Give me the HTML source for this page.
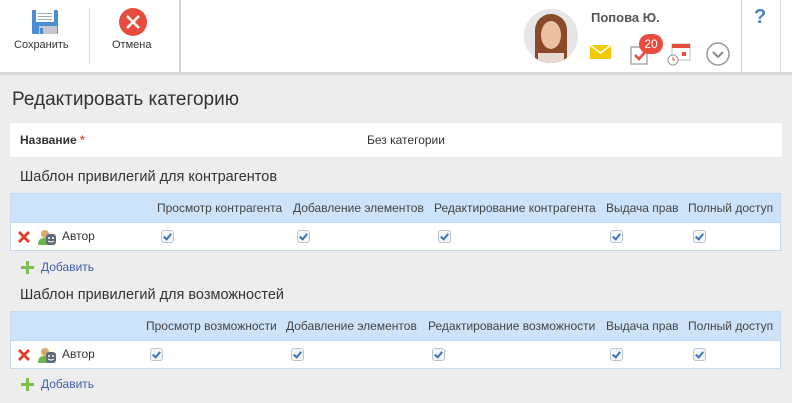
<!DOCTYPE html>
<html><head><meta charset="utf-8"><style>
*{box-sizing:border-box;margin:0;padding:0}
body{width:792px;height:403px;background:#ededed;font-family:"Liberation Sans",sans-serif;position:relative;overflow:hidden;color:#333}
.abs{position:absolute}
.hdr{left:0;top:0;width:792px;height:75px;background:#fff;border-bottom:3px solid #d4d6d9}
.btnlbl{font-size:11px;color:#333}
.tbl{position:absolute;left:10px;width:771px;border:1px solid #c7d9ee;background:#fff}
.th{height:28px;background:#cde3fa;position:relative;font-size:12px;color:#444}
.tr{height:28px;position:relative;font-size:12px}
.th span{position:absolute;top:7px}
.cb{position:absolute;top:7px;width:13px;height:13px;border:1px solid #b9c4d0;border-radius:3px;background:#f4f7fa}
.cb:after{content:"";position:absolute;left:3px;top:1px;width:3px;height:6px;border:solid #3b73b9;border-width:0 2px 2px 0;transform:rotate(40deg)}
.add{font-size:12px;color:#3f5fa8}
.plus{position:absolute;width:13px;height:13px}
.plus:before{content:"";position:absolute;left:5px;top:0;width:3px;height:13px;background:#7cc14a}
.plus:after{content:"";position:absolute;left:0;top:5px;width:13px;height:3px;background:#7cc14a}
.sec{font-size:14.5px;color:#333}
</style></head><body>
<div class="abs hdr"></div>
<div class="abs" style="left:32px;top:10px;width:26px;height:24px;background:#4a8fd4;border-radius:1px"></div>
<div class="abs" style="left:36px;top:10px;width:18px;height:12px;background:#fff"></div>
<div class="abs" style="left:38px;top:13px;width:14px;height:1px;background:#9ab"></div>
<div class="abs" style="left:38px;top:16px;width:14px;height:1px;background:#9ab"></div>
<div class="abs" style="left:38px;top:19px;width:14px;height:1px;background:#9ab"></div>
<div class="abs" style="left:39px;top:26px;width:18px;height:8px;background:#c5c8cc"></div>
<div class="abs" style="left:40px;top:28px;width:3px;height:6px;background:#4a8fd4"></div>
<div class="abs btnlbl" style="left:14px;top:39px">Сохранить</div>
<div class="abs" style="left:89px;top:8px;width:1px;height:56px;background:#ddd"></div>
<div class="abs" style="left:119px;top:8px;width:28px;height:28px;border-radius:50%;background:#e84c3d"></div>
<svg class="abs" style="left:119px;top:8px" width="28" height="28"><path d="M8 8L20 20M20 8L8 20" stroke="#fff" stroke-width="2.5"/></svg>
<div class="abs btnlbl" style="left:112px;top:39px">Отмена</div>
<div class="abs" style="left:179px;top:0;width:2px;height:72px;background:#d4d6d9"></div>
<div class="abs" style="left:524px;top:9px;width:54px;height:54px;border-radius:50%;background:#e6e6e6;overflow:hidden">
<div style="position:absolute;left:11px;top:5px;width:32px;height:56px;border-radius:16px 16px 6px 6px;background:#8a4a2a"></div>
<div style="position:absolute;left:17px;top:12px;width:20px;height:28px;border-radius:50%;background:#ecc0a2"></div>
<div style="position:absolute;left:14px;top:44px;width:26px;height:14px;background:#e8d8d0"></div>
</div>
<div class="abs" style="left:591px;top:10px;font-size:13px;color:#555;font-weight:bold">Попова Ю.</div>
<svg class="abs" style="left:590px;top:45px" width="21" height="14"><rect width="21" height="14" fill="#f5c900"/><path d="M0 0L10.5 8L21 0" stroke="#fff" stroke-width="1.5" fill="none"/></svg>
<svg class="abs" style="left:630px;top:45px" width="20" height="20"><rect x="1" y="2" width="16" height="17" fill="none" stroke="#aaa" stroke-width="1.5"/><path d="M5 10l4 4l6-7" stroke="#e84c3d" stroke-width="2.5" fill="none"/></svg>
<div class="abs" style="left:639px;top:34px;width:24px;height:20px;border-radius:10px;background:#e84c3d;color:#fff;font-size:12px;text-align:center;line-height:20px">20</div>
<svg class="abs" style="left:667px;top:43px" width="26" height="24"><rect x="5" y="1" width="18" height="16" fill="#fff" stroke="#bbb"/><rect x="5" y="1" width="18" height="4" fill="#e84c3d"/><rect x="15" y="9" width="4" height="4" fill="#e84c3d"/><circle cx="6" cy="17" r="5" fill="#fff" stroke="#999"/><path d="M6 14v3h2" stroke="#e84c3d" fill="none"/></svg>
<svg class="abs" style="left:706px;top:42px" width="24" height="24"><circle cx="12" cy="12" r="11" fill="none" stroke="#999" stroke-width="1.5"/><path d="M7 10l5 5l5-5" stroke="#888" stroke-width="2" fill="none"/></svg>
<div class="abs" style="left:741px;top:0;width:1px;height:72px;background:#d4d6d9"></div>
<div class="abs" style="left:754px;top:6px;font-size:20px;font-weight:bold;color:#4a7fc1">?</div>
<div class="abs" style="left:780px;top:0;width:1px;height:72px;background:#d4d6d9"></div>

<div class="abs" style="left:12px;top:89px;font-size:19px;color:#333">Редактировать категорию</div>
<div class="abs" style="left:10px;top:123px;width:772px;height:34px;background:#fff"></div>
<div class="abs" style="left:20px;top:133px;font-size:12px;font-weight:bold;color:#333">Название <span style="color:#e84c3d">*</span></div>
<div class="abs" style="left:367px;top:133px;font-size:12px">Без категории</div>

<div class="abs sec" style="left:20px;top:169px">Шаблон привилегий для контрагентов</div>
<div class="tbl" style="top:193px">
<div class="th"><span style="left:146px">Просмотр контрагента</span><span style="left:282px">Добавление элементов</span><span style="left:423px">Редактирование контрагента</span><span style="left:595px">Выдача прав</span><span style="left:677px">Полный доступ</span></div>
<div class="tr" style="border-top:1px solid #c7d9ee">
<svg class="abs" style="left:7px;top:8px" width="12" height="12"><path d="M1 1L11 11M11 1L1 11" stroke="#e03c2c" stroke-width="2.8"/></svg>
<svg class="abs" style="left:27px;top:5px" width="18" height="18"><circle cx="7" cy="6" r="4" fill="#d9a86c"/><path d="M0 17c0-6 3-7 7-7s5 2 5 7z" fill="#6cb84a"/><rect x="8" y="6" width="10" height="11" rx="3" fill="#5f6a78"/><circle cx="11" cy="10" r="1" fill="#fff"/><circle cx="15" cy="10" r="1" fill="#fff"/><path d="M10 13q3 2 6 0" stroke="#fff" fill="none"/></svg>
<span class="abs" style="left:51px;top:6px">Автор</span>
<div class="cb" style="left:150px"></div><div class="cb" style="left:286px"></div><div class="cb" style="left:427px"></div><div class="cb" style="left:599px"></div><div class="cb" style="left:682px"></div>
</div></div>
<div class="plus abs" style="left:21px;top:261px"></div>
<div class="abs add" style="left:41px;top:260px">Добавить</div>

<div class="abs sec" style="left:20px;top:287px">Шаблон привилегий для возможностей</div>
<div class="tbl" style="top:311px">
<div class="th"><span style="left:135px">Просмотр возможности</span><span style="left:275px">Добавление элементов</span><span style="left:417px">Редактирование возможности</span><span style="left:595px">Выдача прав</span><span style="left:677px">Полный доступ</span></div>
<div class="tr" style="border-top:1px solid #c7d9ee">
<svg class="abs" style="left:7px;top:8px" width="12" height="12"><path d="M1 1L11 11M11 1L1 11" stroke="#e03c2c" stroke-width="2.8"/></svg>
<svg class="abs" style="left:27px;top:5px" width="18" height="18"><circle cx="7" cy="6" r="4" fill="#d9a86c"/><path d="M0 17c0-6 3-7 7-7s5 2 5 7z" fill="#6cb84a"/><rect x="8" y="6" width="10" height="11" rx="3" fill="#5f6a78"/><circle cx="11" cy="10" r="1" fill="#fff"/><circle cx="15" cy="10" r="1" fill="#fff"/><path d="M10 13q3 2 6 0" stroke="#fff" fill="none"/></svg>
<span class="abs" style="left:51px;top:6px">Автор</span>
<div class="cb" style="left:139px"></div><div class="cb" style="left:280px"></div><div class="cb" style="left:421px"></div><div class="cb" style="left:599px"></div><div class="cb" style="left:682px"></div>
</div></div>
<div class="plus abs" style="left:21px;top:378px"></div>
<div class="abs add" style="left:41px;top:377px">Добавить</div>
</body></html>
